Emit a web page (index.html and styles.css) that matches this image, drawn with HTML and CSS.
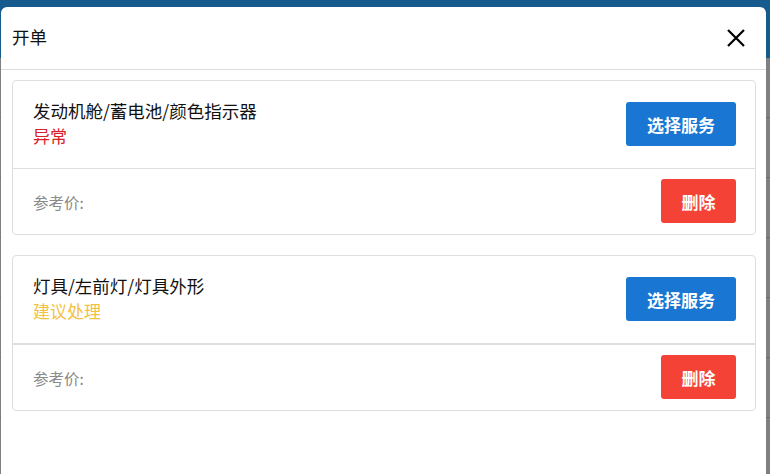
FILE: index.html
```html
<!DOCTYPE html>
<html lang="zh">
<head>
<meta charset="utf-8">
<link rel="stylesheet" href="styles.css">
</head>
<body>
<div class="backdrop">
  <div class="page-top"></div>
  <div class="page-rest"></div>
</div>
<div class="modal">
  <div class="modal-header">
    <span class="modal-title">开单</span>
    <button class="close" aria-label="关闭">
      <svg width="20" height="20" viewBox="0 0 20 20"><path d="M2 2 L18 18 M18 2 L2 18" stroke="#000" stroke-width="2.2" fill="none"/></svg>
    </button>
  </div>
  <div class="modal-body">
    <div class="card">
      <div class="card-top">
        <div class="info">
          <div class="item-name">发动机舱/蓄电池/颜色指示器</div>
          <div class="status status-red">异常</div>
        </div>
        <button class="btn btn-blue">选择服务</button>
      </div>
      <div class="card-bottom">
        <span class="price">参考价:</span>
        <button class="btn btn-red">删除</button>
      </div>
    </div>
    <div class="card">
      <div class="card-top thick">
        <div class="info">
          <div class="item-name">灯具/左前灯/灯具外形</div>
          <div class="status status-orange">建议处理</div>
        </div>
        <button class="btn btn-blue">选择服务</button>
      </div>
      <div class="card-bottom">
        <span class="price">参考价:</span>
        <button class="btn btn-red">删除</button>
      </div>
    </div>
  </div>
</div>
</body>
</html>
```
FILE: styles.css
```css
* { box-sizing: border-box; }
html, body { margin: 0; padding: 0; }
body {
  width: 770px;
  height: 474px;
  overflow: hidden;
  font-family: "Noto Sans CJK SC", "Noto Sans", sans-serif;
  position: relative;
  background: #7f7f7f;
}
.backdrop {
  position: absolute;
  inset: 0;
  display: flex;
  flex-direction: column;
}
.page-top { height: 58px; background: #165a8e; }
.page-rest {
  flex: 1;
  background: repeating-linear-gradient(to bottom, #808080 0, #808080 59px, #6f6f6f 59px, #6f6f6f 60px);
}
.modal {
  position: absolute;
  left: 1px;
  top: 7px;
  width: 765px;
  height: 480px;
  background: #fff;
  border-radius: 6px;
}
.modal-header {
  height: 63px;
  border-bottom: 1px solid #dcdcdc;
  display: flex;
  align-items: center;
  justify-content: space-between;
  padding: 0 20px 0 11px;
}
.modal-title {
  font-size: 17.5px;
  color: #111;
  line-height: 24px;
  margin-bottom: 3px;
}
.close {
  background: none;
  border: 0;
  padding: 0;
  width: 20px;
  height: 20px;
  display: flex;
  margin-bottom: 1px;
}
.modal-body {
  padding: 10px 10px 10px 11px;
  display: flex;
  flex-direction: column;
  gap: 20px;
}
.card {
  border: 1px solid #dedede;
  border-radius: 4px;
}
.card-top {
  display: flex;
  align-items: center;
  justify-content: space-between;
  padding: 18px 19px 20px 20px;
  border-bottom: 1px solid #dedede;
}
.card-top.thick { border-bottom-width: 2px; }
.item-name {
  font-size: 17.5px;
  line-height: 24px;
  color: #111;
}
.status {
  font-size: 17px;
  line-height: 24px;
  margin-top: 1px;
}
.status-red { color: #d92027; }
.status-orange { color: #f4c042; }
.card-bottom {
  display: flex;
  align-items: center;
  justify-content: space-between;
  padding: 10px 19px 11px 20px;
}
.price {
  font-size: 15.5px;
  color: #8a8a8a;
  margin-top: 1px;
}
.btn {
  height: 44px;
  border: 0;
  border-radius: 3px;
  color: #fff;
  font-family: inherit;
  font-size: 17px;
  font-weight: 700;
  padding: 0;
}
.btn-blue { background: #1976d2; width: 110px; margin-top: 1px; }
.btn-red { background: #f44336; width: 75px; }
```
